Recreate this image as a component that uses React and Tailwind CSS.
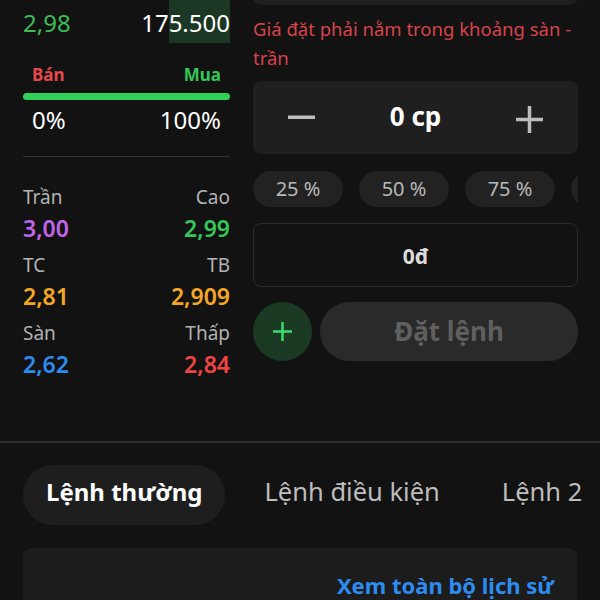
import React from "react";

const font = { fontFamily: '"Noto Sans", "Open Sans", sans-serif' };

function Stat({ label, value, color, align }) {
  return (
    <div className={`flex flex-col ${align === "right" ? "items-end" : "items-start"}`}>
      <div className="text-[19px] leading-[30px] text-[#b3b3b3]">{label}</div>
      <div className={`text-[23px] leading-[32px] font-semibold ${color}`}>{value}</div>
    </div>
  );
}

export default function App() {
  return (
    <div className="w-[600px] h-[600px] overflow-hidden bg-[#121212] text-white" style={font}>
      <div className="h-[441px] flex gap-[23px] px-[23px] overflow-hidden">
        {/* Left column */}
        <div className="w-[207px] shrink-0 flex flex-col">
          <div className="relative h-[46px] flex items-center justify-between">
            <div className="absolute right-0 top-0 h-[43px] w-[61px] bg-[#1a3823]" />
            <span className="relative text-[24px] leading-[30px] text-[#3dbb55]">2,98</span>
            <span className="relative text-[24px] leading-[30px] text-white">175.500</span>
          </div>
          <div className="mt-[17px] px-[9px] flex justify-between text-[17px] leading-[24px] font-bold">
            <span className="text-[#e5484d]">Bán</span>
            <span className="text-[#34c759]">Mua</span>
          </div>
          <div className="mt-[6px] h-[7px] rounded-full bg-[#30d158]" />
          <div className="mt-[5px] px-[9px] flex justify-between text-[24px] leading-[30px] text-white">
            <span>0%</span>
            <span>100%</span>
          </div>
          <div className="mt-[21px] h-px bg-[#333333]" />
          <div className="mt-[25px] grid grid-cols-2 gap-y-[6px]">
            <Stat label="Trần" value="3,00" color="text-[#c065ea]" />
            <Stat label="Cao" value="2,99" color="text-[#34c759]" align="right" />
            <Stat label="TC" value="2,81" color="text-[#f5a623]" />
            <Stat label="TB" value="2,909" color="text-[#f5a623]" align="right" />
            <Stat label="Sàn" value="2,62" color="text-[#2d8cf0]" />
            <Stat label="Thấp" value="2,84" color="text-[#ef4444]" align="right" />
          </div>
        </div>

        {/* Right column */}
        <div className="w-[325px] shrink-0 flex flex-col">
          <div className="-mt-[51px] h-[56px] rounded-[8px] bg-[#1f1f20]" />
          <div className="mt-[9px] text-[18.5px] leading-[29px] text-[#d9434a]">
            Giá đặt phải nằm trong khoảng sàn - trần
          </div>
          <div className="mt-[9px] h-[73px] rounded-[8px] bg-[#1f1f20] flex items-center justify-between px-[35px]">
            <svg width="27" height="27" viewBox="0 0 27 27">
              <rect x="0" y="11.5" width="27" height="3.5" fill="#bdbdbd" />
            </svg>
            <span className="text-[26px] leading-[32px] font-bold text-white -mt-[4px]">0 cp</span>
            <svg width="27" height="27" viewBox="0 0 27 27" className="mt-[4px]">
              <rect x="0" y="11.75" width="27" height="3.5" fill="#bdbdbd" />
              <rect x="11.75" y="0" width="3.5" height="27" fill="#bdbdbd" />
            </svg>
          </div>
          <div className="mt-[17px] h-[36px] flex gap-[16px] overflow-hidden">
            {["25 %", "50 %", "75 %"].map((p) => (
              <div
                key={p}
                className="w-[90px] shrink-0 h-[36px] rounded-full bg-[#222223] flex items-center justify-center text-[20px] text-[#b8b8b8]"
              >
                {p}
              </div>
            ))}
            <div className="w-[90px] shrink-0 h-[36px] rounded-full bg-[#222223]" />
          </div>
          <div className="mt-[16px] h-[64px] rounded-[8px] border-[1.5px] border-[#2b2b2b] flex items-center justify-center pt-[4px] text-[21px] font-bold text-[#dcdcdc]">
            0đ
          </div>
          <div className="mt-[15px] flex gap-[8px]">
            <div className="w-[59px] h-[59px] rounded-full bg-[#1b3a24] flex items-center justify-center">
              <svg width="19" height="19" viewBox="0 0 19 19">
                <rect x="0" y="8.25" width="19" height="2.5" fill="#3ddc6a" />
                <rect x="8.25" y="0" width="2.5" height="19" fill="#3ddc6a" />
              </svg>
            </div>
            <div className="flex-1 h-[59px] rounded-full bg-[#2a2a2a] flex items-center justify-center text-[26px] font-bold text-[#5f5f5f]">
              Đặt lệnh
            </div>
          </div>
        </div>
      </div>

      <div className="h-[2px] bg-[#2d2d2d]" />

      <div className="pt-[22px]">
        <div className="pl-[23px] flex gap-[16px] whitespace-nowrap overflow-hidden">
          <div className="h-[60px] px-[23px] pb-[7px] rounded-full bg-[#1e1e1f] flex items-center text-[24px] font-bold text-white shrink-0">
            Lệnh thường
          </div>
          <div className="h-[60px] px-[23px] pb-[7px] flex items-center text-[25.5px] text-[#bdbdbd] shrink-0">
            Lệnh điều kiện
          </div>
          <div className="h-[60px] pl-[23px] pb-[7px] flex items-center text-[25.5px] text-[#bdbdbd] shrink-0">
            Lệnh 2
          </div>
        </div>
        <div className="mx-[23px] mt-[23px] h-[100px] rounded-[8px] bg-[#1c1c1d] flex justify-end pr-[23px] pt-[23px]">
          <span className="text-[22px] leading-[28px] font-bold text-[#2d8cf0]">Xem toàn bộ lịch sử</span>
        </div>
      </div>
    </div>
  );
}
